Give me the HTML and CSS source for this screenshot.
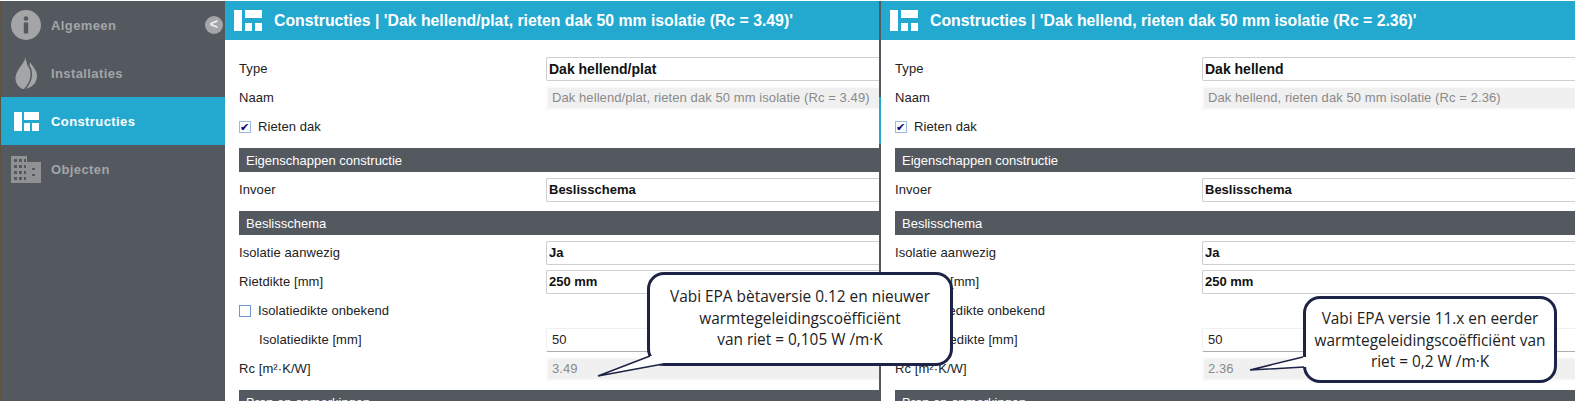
FILE: index.html
```html
<!DOCTYPE html>
<html lang="en">
<head>
  <meta charset="UTF-8">
  <title>Constructies</title>
  <link rel="stylesheet" href="styles.css">
</head>
<body>
  <div class="app">
    <nav class="sidebar">
      <a class="nav-item">
        <span class="nav-slot"><svg class="icon-info" viewBox="0 0 30 30"><circle cx="15" cy="15" r="15" fill="#a3a5a7"/><circle cx="15" cy="8.500" r="2.300" fill="#53595f"/><rect x="12.800" y="12.500" width="4.400" height="11" fill="#53595f"/></svg></span>
        <span>Algemeen</span>
        <span class="collapse">&lt;</span>
      </a>
      <a class="nav-item">
        <span class="nav-slot"><svg class="icon-flame" viewBox="0 0 22 32"><path d="M10 0C11 5 2 11 .5 20 0 26 4 31 8 32 15 32 22 27 22 19 22 13 17 9 15 5 15 8 14 9 13 10 12 7 11 3 10 0z" fill="#a3a5a7"/><path d="M14 9C18 15 17 24 10 32" fill="none" stroke="#53595f" stroke-width="1.600"/></svg></span>
        <span>Installaties</span>
      </a>
      <a class="nav-item active">
        <span class="nav-slot"><svg class="icon-constr" viewBox="0 0 25 19"><path d="M0 0h8v19H0zM10 0h15v8H10zM10 11h6v8h-6zM18 11h7v8h-7z" fill="#fff"/></svg></span>
        <span>Constructies</span>
      </a>
      <a class="nav-item">
        <span class="nav-slot"><svg class="icon-obj" viewBox="0 0 30 27"><path d="M0 0h16v6h14v21H0z" fill="#8f9193"/><g fill="#53595f"><rect x="3" y="3" width="3" height="3"/><rect x="8" y="3" width="3" height="3"/><rect x="13" y="3" width="2" height="3"/><rect x="3" y="9" width="3" height="3"/><rect x="8" y="9" width="3" height="3"/><rect x="13" y="9" width="2" height="3"/><rect x="3" y="15" width="3" height="3"/><rect x="8" y="15" width="3" height="3"/><rect x="13" y="15" width="2" height="3"/><rect x="3" y="21" width="3" height="3"/><rect x="8" y="21" width="3" height="3"/><rect x="13" y="21" width="2" height="3"/><rect x="21" y="12" width="3" height="2"/><rect x="21" y="18" width="3" height="2"/></g></svg></span>
        <span>Objecten</span>
      </a>
    </nav>

    <main class="panel panel-first">
      <header class="panel-head">
        <svg class="head-icon" viewBox="0 0 28 21"><path d="M0 0h8v21H0zM11 0h17v8H11zM11 13h7v8h-7zM21 13h7v8h-7z" fill="#fff"/></svg>
        <h1>Constructies | 'Dak hellend/plat, rieten dak 50 mm isolatie (Rc = 3.49)'</h1>
      </header>
      <div class="form">
        <div class="row"><label>Type</label><div class="field strong large">Dak hellend/plat</div></div>
        <div class="row"><label>Naam</label><div class="field readonly">Dak hellend/plat, rieten dak 50 mm isolatie (Rc = 3.49)</div></div>
        <div class="row"><label class="check"><span class="box checked">&#10004;</span>Rieten dak</label></div>
        <h2>Eigenschappen constructie</h2>
        <div class="row"><label>Invoer</label><div class="field strong">Beslisschema</div></div>
        <h2>Beslisschema</h2>
        <div class="row"><label>Isolatie aanwezig</label><div class="field strong">Ja</div></div>
        <div class="row"><label>Rietdikte [mm]</label><div class="field strong">250 mm</div></div>
        <div class="row"><label class="check"><span class="box"></span>Isolatiedikte onbekend</label></div>
        <div class="row"><label class="indent">Isolatiedikte [mm]</label><div class="field plain">50</div></div>
        <div class="row"><label>Rc [m²·K/W]</label><div class="field readonly">3.49</div></div>
        <h2>Bron en opmerkingen</h2>
      </div>
      <div class="callout callout-first">
        <svg class="tail" viewBox="0 0 75 30"><path d="M55 6 3 26 68 14V6z" fill="#fff"/><path d="M55 6 3 26 68 14" fill="none" stroke="#1d2347" stroke-width="1.500"/></svg>
        Vabi EPA bètaversie 0.12 en nieuwer<br>warmtegeleidingscoëfficiënt<br>van riet = 0,105 W /m·K
      </div>
    </main>

    <div class="divider"></div>

    <main class="panel panel-second">
      <header class="panel-head">
        <svg class="head-icon" viewBox="0 0 28 21"><path d="M0 0h8v21H0zM11 0h17v8H11zM11 13h7v8h-7zM21 13h7v8h-7z" fill="#fff"/></svg>
        <h1>Constructies | 'Dak hellend, rieten dak 50 mm isolatie (Rc = 2.36)'</h1>
      </header>
      <div class="form">
        <div class="row"><label>Type</label><div class="field strong large">Dak hellend</div></div>
        <div class="row"><label>Naam</label><div class="field readonly">Dak hellend, rieten dak 50 mm isolatie (Rc = 2.36)</div></div>
        <div class="row"><label class="check"><span class="box checked">&#10004;</span>Rieten dak</label></div>
        <h2>Eigenschappen constructie</h2>
        <div class="row"><label>Invoer</label><div class="field strong">Beslisschema</div></div>
        <h2>Beslisschema</h2>
        <div class="row"><label>Isolatie aanwezig</label><div class="field strong">Ja</div></div>
        <div class="row"><label>Rietdikte [mm]</label><div class="field strong">250 mm</div></div>
        <div class="row"><label class="check"><span class="box"></span>Isolatiedikte onbekend</label></div>
        <div class="row"><label class="indent">Isolatiedikte [mm]</label><div class="field plain">50</div></div>
        <div class="row"><label>Rc [m²·K/W]</label><div class="field readonly">2.36</div></div>
        <h2>Bron en opmerkingen</h2>
      </div>
      <div class="callout callout-second">
        <svg class="tail" viewBox="0 0 75 30"><path d="M56 7 3 20 57 17 61 17V7z" fill="#fff"/><path d="M56 7 3 20 57 17" fill="none" stroke="#1d2347" stroke-width="1.500"/></svg>
        Vabi EPA versie 11.x en eerder<br>warmtegeleidingscoëfficiënt van<br>riet = 0,2 W /m·K
      </div>
    </main>
  </div>
</body>
</html>
```

FILE: styles.css
```css
html, body {
  margin: 0;
  height: 401px;
  overflow: hidden;
  background-color: #fff;
}
body {
  font-family: "Liberation Sans", Arial, sans-serif;
  font-size: 13px;
  letter-spacing: .08px;
  color: #222;
}
.app {
  display: flex;
  height: 400px;
  margin-top: 1px;
  border-left: 1px solid #5b5440;
}
.sidebar {
  flex: 0 0 224px;
  background-color: #53595f;
}
.nav-item {
  position: relative;
  display: flex;
  align-items: center;
  height: 48px;
  color: #a3a5a7;
  font-weight: bold;
  font-size: 13px;
  letter-spacing: .4px;
}
.nav-item.active {
  background-color: #23a9d0;
  color: #fff;
}
.nav-slot {
  display: flex;
  flex: 0 0 30px;
  justify-content: center;
  margin: 0 10px;
}
.icon-info {
  width: 30px;
  height: 30px;
}
.icon-flame {
  width: 22px;
  height: 32px;
}
.icon-constr {
  width: 25px;
  height: 19px;
}
.icon-obj {
  width: 30px;
  height: 27px;
}
.collapse {
  position: absolute;
  top: 15px;
  right: 2px;
  width: 18px;
  height: 18px;
  border-radius: 50%;
  background-color: #a3a5a7;
  color: #f2f2f2;
  text-align: center;
  line-height: 17px;
  font-size: 14px;
}
.panel {
  position: relative;
}
.panel-first {
  flex: 0 0 654px;
}
.panel-second {
  flex: 1;
}
.divider {
  flex: 0 0 2px;
  background: linear-gradient(#53595f 96px, #23a9d0 96px, #23a9d0 143px, #53595f 143px);
}
.panel-head {
  display: flex;
  align-items: center;
  height: 39px;
  background-color: #23a9d0;
  color: #fff;
}
.head-icon {
  width: 28px;
  height: 21px;
  margin: 0 12px 0 9px;
}
h1 {
  margin: 0;
  font-size: 15.800px;
  font-weight: bold;
  letter-spacing: 0;
  white-space: nowrap;
}
.form {
  padding: 14px 0 0 14px;
}
.row {
  display: flex;
  align-items: center;
  height: 29px;
}
.row label {
  flex: 0 0 307px;
}
.row .check {
  display: flex;
  align-items: center;
  gap: 7px;
}
.row .indent {
  padding-left: 20px;
  flex-basis: 287px;
}
.box {
  display: inline-block;
  box-sizing: border-box;
  width: 12px;
  height: 12px;
  border: 1px solid #6f95d6;
  background-color: #fff;
  color: #00006e;
  font-size: 11px;
  line-height: 10px;
  text-align: center;
}
.checked {
  border-color: #9db8e8;
}
.field {
  flex: 1;
  box-sizing: border-box;
  height: 24px;
  padding: 0 4px 0 2px;
  line-height: 22px;
  border: 1px solid #cfcfcf;
  border-right: 0;
  border-radius: 2px 0 0 2px;
  white-space: nowrap;
}
.strong {
  font-weight: bold;
  letter-spacing: 0;
  color: #111;
}
.large {
  font-size: 14px;
}
.plain {
  padding-left: 5px;
  border-color: #f0f0f0;
  border-bottom-color: #adadad;
}
.readonly {
  padding-left: 4px;
  border: 2px solid #fafafa;
  border-right: 0;
  line-height: 20px;
  background-color: #f0f0f0;
  background-clip: padding-box;
  color: #8a8a8a;
}
h2 {
  margin: 7px 0 3px;
  height: 24px;
  padding-left: 7px;
  background-color: #53595f;
  color: #fff;
  font-size: 13px;
  font-weight: normal;
  line-height: 25px;
  letter-spacing: 0;
}
.callout {
  position: absolute;
  z-index: 2;
  box-sizing: border-box;
  background-color: #fff;
  border: 3px solid #1d2347;
  border-radius: 17px;
  font-family: "Open Sans", sans-serif;
  font-size: 15.400px;
  line-height: 21.500px;
  letter-spacing: 0;
  text-align: center;
  white-space: nowrap;
  color: #222;
}
.callout-first {
  left: 422px;
  top: 271px;
  width: 306px;
  height: 94px;
  padding-top: 11px;
}
.callout-second {
  left: 422px;
  top: 295px;
  width: 254px;
  height: 87px;
  padding-top: 9px;
}
.tail {
  position: absolute;
  width: 75px;
  height: 30px;
}
.callout-first .tail {
  left: -55px;
  top: 75px;
}
.callout-second .tail {
  left: -59px;
  top: 51px;
}
```
